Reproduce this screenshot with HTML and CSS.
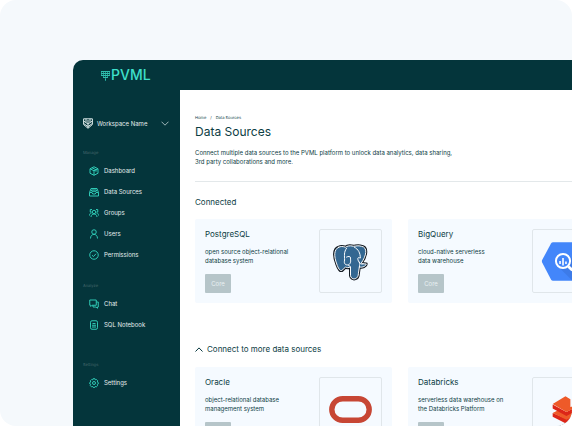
FILE: index.html
```html
<!DOCTYPE html>
<html lang="en">
<head>
<meta charset="utf-8">
<meta name="viewport" content="width=device-width, initial-scale=1">
<title>PVML – Data Sources</title>
<link rel="stylesheet" href="styles.css">
</head>
<body>
<div class="stage">
  <div class="window">
    <header class="topbar">
      <a class="brand" href="#">
        <svg class="brand-mark" viewBox="0 0 9 11" aria-hidden="true">
          <path d="M0 1.500h9M0 3.500h9M0 5.500h9M2 7.500h5M4 9.500h1" stroke-width="1"/>
          <path d="M.5 1v5M2.500 1v7M4.500 1v10M6.500 1v7M8.500 1v5" stroke-width="1" opacity=".7"/>
        </svg>
        <span>PVML</span>
      </a>
    </header>
    <div class="body">
      <aside class="sidebar">
        <button class="workspace" type="button">
          <svg class="shield" viewBox="0 0 10 11" aria-hidden="true">
            <path d="M.6.8h8.800v5.700L5 10.300.6 6.500z"/>
            <path d="M.6 3l4.400 3 4.400-3M.6 5.500L5 8.500l4.400-3M3 .8v3.500M7 .8v3.500M5 2v8"/>
          </svg>
          <span>Workspace Name</span>
          <svg class="chevron" viewBox="0 0 8 5" aria-hidden="true"><path d="M.5.7L4 4.200 7.500.7"/></svg>
        </button>
        <nav>
          <section class="group">
            <h2>Manage</h2>
            <a href="#"><svg viewBox="0 0 20 20" aria-hidden="true"><path d="M10 1.500l8 4v9l-8 4-8-4v-9zM2 5.500l8 4 8-4M10 9.500v9M6 3.500l8 4v4"/></svg>Dashboard</a>
            <a href="#"><svg viewBox="0 0 20 20" aria-hidden="true"><path d="M1 11l3-8h12l3 8v7H1zM1 11h5l1.500 3h5L14 11h5M5 8.500V6h10v2.500M7 10V8.500h6V10"/></svg>Data Sources</a>
            <a href="#"><svg viewBox="0 0 20 20" aria-hidden="true"><circle cx="10" cy="8" r="3.500"/><path d="M4 18c0-8 12-8 12 0M6 3H2.500v5H5M1 15c0-3 1-5 4-5M14 3h3.500v5H15M19 15c0-3-1-5-4-5"/></svg>Groups</a>
            <a href="#"><svg viewBox="0 0 20 20" aria-hidden="true"><circle cx="10" cy="6" r="4.500"/><path d="M3 19c0-11 14-11 14 0"/></svg>Users</a>
            <a href="#"><svg viewBox="0 0 20 20" aria-hidden="true"><circle cx="10" cy="10" r="8.500"/><path d="M6 10.500l3 2.500 5-5.500"/></svg>Permissions</a>
          </section>
          <section class="group">
            <h2>Analyze</h2>
            <a href="#"><svg viewBox="0 0 20 20" aria-hidden="true"><path d="M1.500 2h13v10.500H6L3.500 15v-2.500h-2zM14.500 6h4v10h-1.500v2.500L14 16H8v-3.500"/></svg>Chat</a>
            <a href="#"><svg viewBox="0 0 20 20" aria-hidden="true"><rect x="3" y="1.500" width="14" height="17" rx="3"/><path d="M7 7h6M6 10.500h8M6 14h8"/></svg>SQL Notebook</a>
          </section>
          <section class="group group-last">
            <h2>Settings</h2>
            <a href="#"><svg viewBox="0 0 20 20" aria-hidden="true"><circle cx="10" cy="10" r="3"/><path d="M8 1.500h4l.7 2.200 2.300-.7 2.500 2.700-1 2.300 2 1v3l-2 1 .6 2.500-2.600 2.200-2-.9-1 2.200H8.500l-1-2.200-2.500.9-2.500-2.600 1-2.300-2-1V9l2-1-.8-2.400L5.300 3l2 .8z"/></svg>Settings</a>
          </section>
        </nav>
      </aside>
      <main class="content">
        <nav class="crumbs" aria-label="Breadcrumb"><a href="#">Home</a><span>/</span><a href="#">Data Sources</a></nav>
        <h1>Data Sources</h1>
        <p class="intro">Connect multiple data sources to the PVML platform to unlock data analytics, data sharing,<br>3rd party collaborations and more.</p>
        <h2 class="section-title">Connected</h2>
        <div class="cards">
          <article class="card">
            <div class="card-text">
              <h3>PostgreSQL</h3>
              <p>open source object-relational<br>database system</p>
              <button type="button">Core</button>
            </div>
            <div class="logo">
              <svg viewBox="0 0 62 62" aria-hidden="true">
                <g stroke-linecap="round" stroke-linejoin="round" transform="translate(0 1)">
                  <path d="M19 16c-5 2-5 9-2 17 2 6 4 8 6 6l3-3c1 1 3 1 5 0v9c1 5 8 4 8-2l1-7c3 1 7-1 7-3-2 0-3 0-5-1 5-7 7-16 0-17-3-1-6 0-8 0-4-1-7 0-8 1-3-1-5-1-7 0z" fill="#111820" stroke="#111820" stroke-width="3"/>
                  <path d="M19 16c-5 2-5 9-2 17 2 6 4 8 6 6l3-3c1 1 3 1 5 0v9c1 5 8 4 8-2l1-7c3 1 7-1 7-3-2 0-3 0-5-1 5-7 7-16 0-17-3-1-6 0-8 0-4-1-7 0-8 1-3-1-5-1-7 0z" fill="#336791" stroke="#fff" stroke-width="1"/>
                  <path d="M27 17c-3 4-2 8-2 12-1 4 1 5 3 5 1 0 2 1 3 2M27 26c2-1 4-1 4 1 0 3 1 5-2 7M35 16c4 2 6 6 6 11-3-1-3 0-2 3 1 2 3 4 5 3M40 31c1 2 0 3 0 5" fill="none" stroke="#fff" stroke-width="1"/>
                </g>
              </svg>
            </div>
          </article>
          <article class="card">
            <div class="card-text">
              <h3>BigQuery</h3>
              <p>cloud-native serverless<br>data warehouse</p>
              <button type="button">Core</button>
            </div>
            <div class="logo">
              <svg viewBox="0 0 62 62" aria-hidden="true">
                <path d="M20.500 12h21q1.500 0 2.200 1.200L53 30q.6 1.200 0 2.400L43.700 49.800Q43 51 41.500 51h-21q-1.500 0-2.200-1.200L9.300 32.400q-.6-1.200 0-2.400l9-16.800Q19 12 20.500 12z" fill="#4386fa"/>
                <path d="M26 37l14 14h1.500q1.500 0 2.200-1.200L50 38 36 25z" fill="#3d7be8"/>
                <circle cx="30.500" cy="31" r="7.200" fill="#4386fa" stroke="#fff" stroke-width="2"/>
                <path d="M27.500 31v3M30.500 28v7.500M33.500 31.500v2.500" stroke="#fff" stroke-width="1.600"/>
                <path d="M36 36.500l4 4" stroke="#fff" stroke-width="2.800"/>
              </svg>
            </div>
          </article>
        </div>
        <h2 class="section-title more">
          <svg viewBox="0 0 8 5" aria-hidden="true"><path d="M.5 4.500L4 .9l3.500 3.600"/></svg>
          Connect to more data sources
        </h2>
        <div class="cards">
          <article class="card">
            <div class="card-text">
              <h3>Oracle</h3>
              <p>object-relational database<br>management system</p>
              <button type="button">Core</button>
            </div>
            <div class="logo">
              <svg viewBox="0 0 62 62" aria-hidden="true"><rect x="12" y="20.500" width="38" height="22" rx="11" fill="none" stroke="#c74634" stroke-width="5.500"/></svg>
            </div>
          </article>
          <article class="card">
            <div class="card-text">
              <h3>Databricks</h3>
              <p>serverless data warehouse on<br>the Databricks Platform</p>
              <button type="button">Core</button>
            </div>
            <div class="logo">
              <svg viewBox="0 0 62 62" aria-hidden="true">
                <path d="M20 35l14 6 14-7v4l-14 8-14-7z" fill="#dc2618"/>
                <path d="M20 35l6-3 8 4 14-7v6l-14 7z" fill="#ee5a29"/>
                <path d="M20 26.500l14 7.500 14-7.500v4l-14 7.500-14-7.500z" fill="#dc2618"/>
                <path d="M20 26l13-8 5 3v8l10-4v2l-14 7z" fill="#ee5a29"/>
              </svg>
            </div>
          </article>
        </div>
      </main>
    </div>
  </div>
</div>
</body>
</html>
```
FILE: styles.css
```css
* {
  box-sizing: border-box;
}

body {
  margin: 0;
  background: #fff;
  color: #0c3d44;
  font-family: Inter, "Liberation Sans", sans-serif;
  font-size: 6px;
  line-height: 9px;
}

h1, h2, h3, p {
  margin: 0;
  font-weight: 400;
}

a {
  color: inherit;
  text-decoration: none;
}

button {
  border: 0;
  font: inherit;
}

svg {
  display: block;
  flex: none;
}

.stage {
  display: flex;
  height: 100vh;
  padding: 60px 0 0 73px;
  overflow: hidden;
  border-radius: 16px;
  background: #f5f9fc;
}

.window {
  display: flex;
  flex: 1;
  flex-direction: column;
  min-width: 0;
  overflow: hidden;
  border-top-left-radius: 10px;
  background: #04353b;
}

.topbar {
  display: flex;
  flex: none;
  align-items: center;
  height: 30px;
  padding-left: 28px;
}

.brand {
  display: flex;
  align-items: center;
  gap: 1px;
  color: #3ee0cb;
  font-size: 14px;
  font-weight: 500;
  line-height: 18px;
}

.brand-mark {
  width: 9px;
  height: 11px;
  fill: none;
  stroke: #2fbdae;
}

.body {
  display: flex;
  flex: 1;
  min-height: 0;
}

.sidebar {
  flex: none;
  width: 107px;
  padding: 22px 11px 0 10px;
  color: #e4edee;
}

.workspace {
  display: flex;
  align-items: center;
  gap: 4px;
  width: 100%;
  height: 23px;
  margin-bottom: 14px;
  padding: 0;
  background: none;
  color: inherit;
}

.shield {
  width: 10px;
  height: 11px;
  fill: none;
  stroke: #dbe8e8;
  stroke-width: 1;
}

.chevron {
  width: 8px;
  height: 5px;
  margin-left: auto;
  fill: none;
  stroke: #9eb5b7;
  stroke-width: 1;
}

.group {
  margin-bottom: 17px;
}

.group h2 {
  margin-bottom: 3px;
  color: #47696d;
  font-size: 4px;
  line-height: 8px;
  text-rendering: geometricPrecision;
}

.group a {
  display: flex;
  align-items: center;
  gap: 5px;
  height: 21px;
  padding-left: 6px;
}

.group svg {
  width: 10px;
  height: 10px;
  fill: none;
  stroke: #2fc9b5;
  stroke-width: 2;
}

.group-last {
  margin-top: 26px;
}

.content {
  flex: 1;
  min-width: 0;
  padding: 24px 0 0 15px;
  overflow: hidden;
  background: #fff;
}

.crumbs {
  display: flex;
  gap: 4px;
  font-size: 4px;
  line-height: 8px;
  text-rendering: geometricPrecision;
}

h1 {
  margin: 2px 0 8px;
  font-size: 12px;
  line-height: 16px;
}

.intro {
  padding-bottom: 15px;
  border-bottom: 1px solid #e3e8ea;
}

.section-title {
  display: flex;
  align-items: center;
  gap: 4px;
  margin: 15px 0 12px;
  font-size: 8px;
  line-height: 10px;
}

.more {
  margin: 41px 0 13px;
}

.more svg {
  width: 8px;
  height: 5px;
  fill: none;
  stroke: #04363d;
  stroke-width: 1;
}

.cards {
  display: grid;
  grid-template-columns: repeat(2, minmax(197px, 1fr));
  gap: 16px;
}

.card {
  display: flex;
  justify-content: space-between;
  padding: 10px;
  border-radius: 2px;
  background: #f5faff;
}

.card-text {
  display: flex;
  flex-direction: column;
  align-items: flex-start;
  white-space: nowrap;
}

.card h3 {
  margin-bottom: 7px;
  font-size: 8px;
  line-height: 11px;
}

.card button {
  width: 26px;
  height: 19px;
  margin-top: auto;
  padding: 0;
  border-radius: 1px;
  background: #b6c5c9;
  color: #e9f0f2;
}

.logo {
  flex: none;
  width: 63px;
  height: 64px;
  border: 1px solid #e0e6ea;
  border-radius: 2px;
}

.logo svg {
  width: 61px;
  height: 62px;
}
```
